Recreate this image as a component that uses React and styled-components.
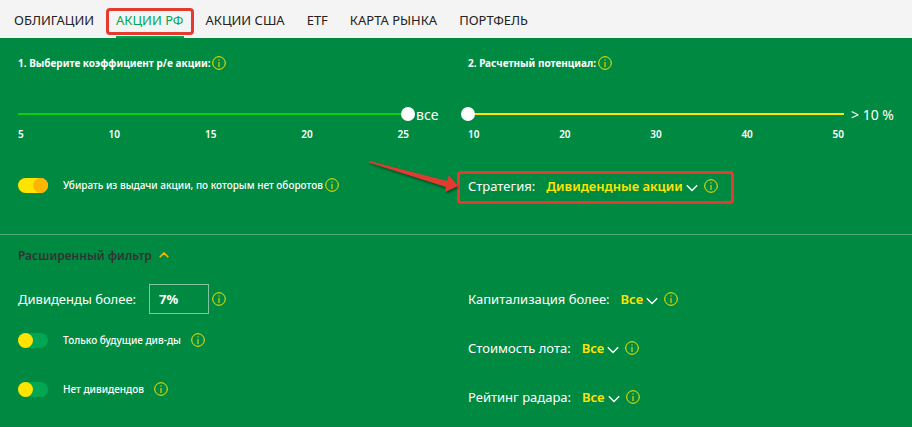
import React, { useState } from 'react'
import styled, { createGlobalStyle, css } from 'styled-components'

const tabs = ['ОБЛИГАЦИИ', 'АКЦИИ РФ', 'АКЦИИ США', 'ETF', 'КАРТА РЫНКА', 'ПОРТФЕЛЬ']

function Info() {
  return (
    <InfoButton type="button" aria-label="Подсказка">
      <svg width="14" height="14" viewBox="0 0 14 14" fill="none" stroke="currentColor">
        <circle cx="7" cy="7" r="6.3" />
        <path d="M7 6v5M7 3.4v1.2" />
      </svg>
    </InfoButton>
  )
}

function Chevron() {
  return (
    <ChevronIcon viewBox="0 0 12 8" aria-hidden="true">
      <path d="M.8 1.2L6 6.4l5.2-5.2" />
    </ChevronIcon>
  )
}

function Filter({ id, label, value, options }) {
  return (
    <>
      <FieldLabel htmlFor={id}>{label}</FieldLabel>
      <Select id={id} defaultValue={value}>
        {options.map((option) => (
          <option key={option}>{option}</option>
        ))}
      </Select>
      <Chevron />
      <Info />
    </>
  )
}

function App() {
  const [active, setActive] = useState('АКЦИИ РФ')
  const [open, setOpen] = useState(true)
  const [ratio, setRatio] = useState(25)
  const [potential, setPotential] = useState(10)

  return (
    <Page>
      <GlobalStyle />
      <Nav>
        {tabs.map((tab) => (
          <Tab key={tab} href="#" $active={tab === active} onClick={() => setActive(tab)}>
            {tab}
          </Tab>
        ))}
      </Nav>

      <Main>
        <Columns>
          <div>
            <Heading>
              <label htmlFor="ratio">1. Выберите коэффициент p/e акции:</label>
              <Info />
            </Heading>
            <SliderRow>
              <Slider id="ratio" type="range" min="5" max="25" value={ratio} $color="#0ccf14"
                onChange={(e) => setRatio(Number(e.target.value))} />
              <SliderValue htmlFor="ratio" $width={29}>{ratio === 25 ? 'все' : ratio}</SliderValue>
            </SliderRow>
            <Ticks $end={35}>
              {[5, 10, 15, 20, 25].map((n) => <span key={n}>{n}</span>)}
            </Ticks>
            <SwitchRow $top={33}>
              <Switch id="turnover" type="checkbox" role="switch" defaultChecked />
              <SwitchLabel htmlFor="turnover">Убирать из выдачи акции, по которым нет оборотов</SwitchLabel>
              <Info />
            </SwitchRow>
          </div>
          <div>
            <Heading>
              <label htmlFor="potential">2. Расчетный потенциал:</label>
              <Info />
            </Heading>
            <SliderRow $overhang>
              <Slider id="potential" type="range" min="10" max="50" value={potential} $color="#ffe400"
                onChange={(e) => setPotential(Number(e.target.value))} />
              <SliderValue htmlFor="potential" $width={50}>&gt; {potential} %</SliderValue>
            </SliderRow>
            <Ticks $end={50}>
              {[10, 20, 30, 40, 50].map((n) => <span key={n}>{n}</span>)}
            </Ticks>
            <Strategy>
              <Filter id="strategy" label="Стратегия:" value="Дивидендные акции"
                options={['Все', 'Дивидендные акции']} />
              <Arrow viewBox="0 0 92 36" aria-hidden="true">
                <path d="M1 0L79 20l2-6 9 11-13 6 1-5L1 1.5z" />
              </Arrow>
            </Strategy>
          </div>
        </Columns>
      </Main>

      <Advanced>
        <Toggle type="button" aria-expanded={open} onClick={() => setOpen(!open)}>
          Расширенный фильтр
          <ToggleIcon viewBox="0 0 10 6" $open={open} aria-hidden="true">
            <path d="M.7 5.3L5 1l4.3 4.3" />
          </ToggleIcon>
        </Toggle>
        {open && (
          <Columns>
            <div>
              <Field>
                <FieldLabel htmlFor="dividends">Дивиденды более:</FieldLabel>
                <Percent id="dividends" type="text" defaultValue="7%" />
                <Info />
              </Field>
              <SwitchRow $top={16}>
                <Switch id="future" type="checkbox" role="switch" />
                <SwitchLabel htmlFor="future" $wide>Только будущие див-ды</SwitchLabel>
                <Info />
              </SwitchRow>
              <SwitchRow $top={29}>
                <Switch id="none" type="checkbox" role="switch" />
                <SwitchLabel htmlFor="none" $wide>Нет дивидендов</SwitchLabel>
                <Info />
              </SwitchRow>
            </div>
            <Stack>
              <Field><Filter id="cap" label="Капитализация более:" value="Все" options={['Все']} /></Field>
              <Field><Filter id="lot" label="Стоимость лота:" value="Все" options={['Все']} /></Field>
              <Field><Filter id="rating" label="Рейтинг радара:" value="Все" options={['Все']} /></Field>
            </Stack>
          </Columns>
        )}
      </Advanced>
    </Page>
  )
}

export default App

const GlobalStyle = createGlobalStyle`
  *, *::before, *::after {
    box-sizing: border-box;
  }
  body {
    margin: 0;
    background: #008a41;
  }
  button, input, select {
    font-family: inherit;
  }
`
const Page = styled.div`
  min-height: 100vh;
  background: #008a41;
  color: #fff;
  font-family: 'Noto Sans', 'Open Sans', sans-serif;
`
const Nav = styled.nav`
  display: flex;
  gap: 22px;
  height: 38px;
  padding: 0 14px;
  background: #f4f4f4;
`
const Tab = styled.a`
  position: relative;
  padding-top: 2px;
  border-bottom: 2px solid transparent;
  color: #222;
  font-size: 13px;
  line-height: 36px;
  text-decoration: none;
  white-space: nowrap;

  ${(props) => props.$active && css`
    color: #00a651;
    border-bottom-color: #00a651;

    &::after {
      content: '';
      position: absolute;
      top: 8px;
      left: -10px;
      right: -10px;
      height: 27px;
      border: 3px solid #e53a30;
      border-radius: 4px;
    }
  `}
`
const Main = styled.section`
  padding: 15px 18px 39px;
  border-bottom: 1px solid #4dad7a;
`
const Advanced = styled.section`
  padding: 10px 18px 12px;
`
const Columns = styled.div`
  display: grid;
  grid-template-columns: 1fr 1fr;
  column-gap: 24px;
`
const Heading = styled.div`
  display: flex;
  align-items: center;
  gap: 2px;
  height: 20px;
  font-size: 10px;
  font-weight: 700;
  white-space: nowrap;
`
const InfoButton = styled.button`
  display: flex;
  flex: none;
  padding: 0;
  border: 0;
  background: none;
  color: #ffe400;
  cursor: pointer;
`
const SliderRow = styled.div`
  display: flex;
  align-items: center;
  height: 20px;
  margin-top: 31px;
  margin-left: ${(props) => (props.$overhang ? '-7px' : '0')};
`
const Slider = styled.input`
  flex: 1;
  min-width: 0;
  height: 14px;
  margin: 0;
  appearance: none;
  background: linear-gradient(${(props) => props.$color}, ${(props) => props.$color}) center / 100% 2px no-repeat;
  cursor: pointer;

  &::-webkit-slider-thumb {
    appearance: none;
    width: 14px;
    height: 14px;
    border-radius: 50%;
    background: #fff;
  }
`
const SliderValue = styled.label`
  flex: none;
  width: ${(props) => props.$width}px;
  padding-left: ${(props) => (props.$width > 40 ? '7px' : '1px')};
  font-size: 14px;
  white-space: nowrap;
`
const Ticks = styled.div`
  display: flex;
  justify-content: space-between;
  margin-top: 2px;
  margin-right: ${(props) => props.$end}px;
  font-size: 10px;
  font-weight: 600;
  line-height: 16px;
`
const SwitchRow = styled.div`
  display: flex;
  align-items: center;
  height: 20px;
  margin-top: ${(props) => props.$top}px;
`
const Switch = styled.input`
  display: flex;
  flex: none;
  width: 30px;
  height: 15px;
  margin: 0 15px 0 0;
  appearance: none;
  border-radius: 8px;
  background: #00a651;
  cursor: pointer;

  &::before {
    content: '';
    width: 15px;
    height: 15px;
    border-radius: 50%;
    background: #ffe400;
  }
  &:checked {
    justify-content: flex-end;
    background: #ffe400;
  }
  &:checked::before {
    background: #ffb400;
  }
`
const SwitchLabel = styled.label`
  margin-right: ${(props) => (props.$wide ? '10px' : '2px')};
  font-size: 10px;
  font-weight: 500;
  white-space: nowrap;
`
const Field = styled.div`
  display: flex;
  align-items: center;
  height: 30px;
`
const Strategy = styled(Field)`
  position: relative;
  width: max-content;
  height: 33px;
  margin: 29px 0 -24px -11px;
  padding: 0 13px 3px 8px;
  border: 3px solid #e53a30;
  border-radius: 4px;
`
const Arrow = styled.svg`
  position: absolute;
  top: -13px;
  right: 100%;
  width: 92px;
  height: 36px;
  fill: #e53a30;
  filter: drop-shadow(1px 2px 1px rgba(0, 0, 0, 0.4));
`
const FieldLabel = styled.label`
  margin-right: 11px;
  font-size: 13px;
  white-space: nowrap;
`
const Select = styled.select`
  field-sizing: content;
  padding: 0;
  border: 0;
  appearance: none;
  background: none;
  color: #ffe400;
  font-size: 13px;
  font-weight: 600;
  cursor: pointer;
`
const ChevronIcon = styled.svg`
  flex: none;
  width: 12px;
  height: 8px;
  margin: 4px 6px 0 3px;
  fill: none;
  stroke: #fff;
  stroke-width: 1.4;
`
const Percent = styled.input`
  width: 60px;
  height: 30px;
  margin: 0 3px 0 2px;
  padding: 0 9px;
  border: 1px solid #80c5a0;
  border-radius: 0;
  background: none;
  color: #fff;
  font-size: 13px;
  font-weight: 700;
`
const Toggle = styled.button`
  display: flex;
  align-items: center;
  gap: 7px;
  height: 20px;
  margin-bottom: 19px;
  padding: 0;
  border: 0;
  background: none;
  color: #333;
  font-size: 12px;
  font-weight: 600;
  cursor: pointer;
`
const ToggleIcon = styled.svg`
  width: 10px;
  height: 6px;
  fill: none;
  stroke: #ffb400;
  stroke-width: 1.6;
  transform: ${(props) => (props.$open ? 'none' : 'rotate(180deg)')};
`
const Stack = styled.div`
  display: grid;
  align-content: start;
  row-gap: 19px;
`
